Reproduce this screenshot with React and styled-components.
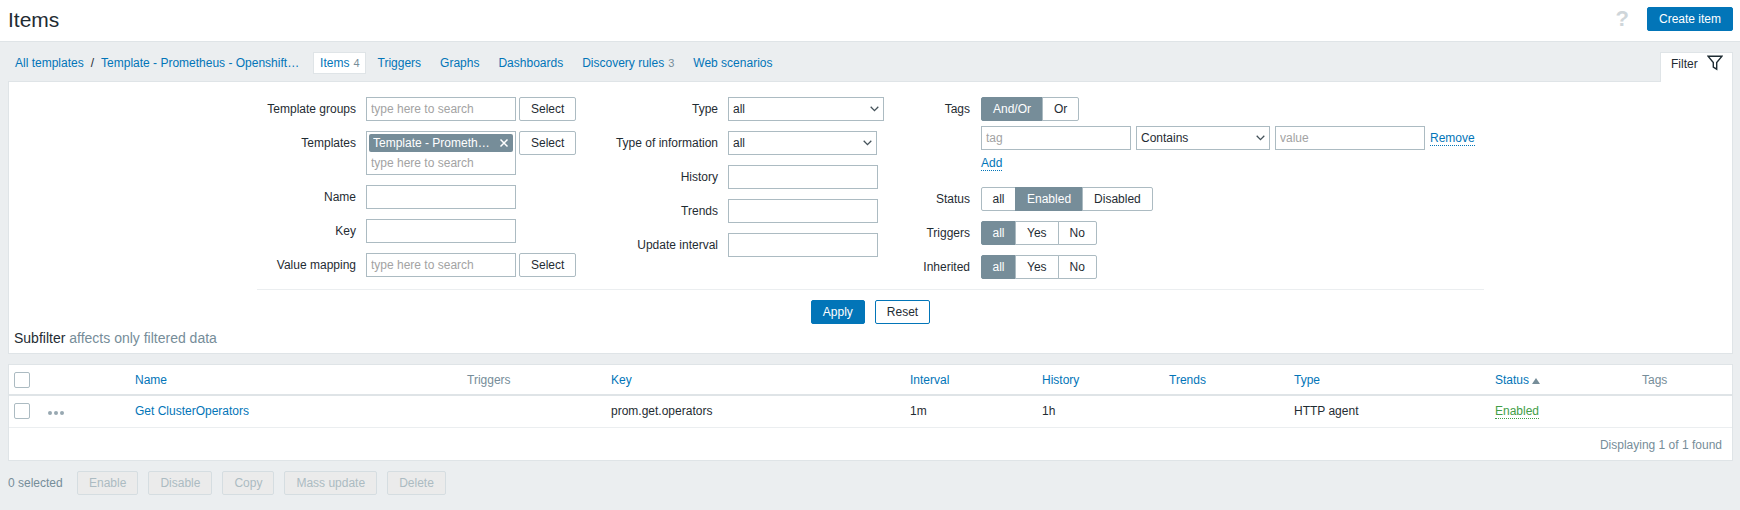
import React from "react";
import styled, { createGlobalStyle } from "styled-components";

const Global = createGlobalStyle`
  html, body { margin: 0; padding: 0; background: #ebeef0; }
  body { font-family: "Liberation Sans", Arial, sans-serif; font-size: 12px; color: #1f2c33; line-height: 14px; }
  * { box-sizing: border-box; }
  input::placeholder { color: #a3a3a3; opacity: 1; }
`;

const Header = styled.header`
  height: 42px; background: #fff; border-bottom: 1px solid #dfe4e7;
  display: flex; align-items: flex-start; justify-content: space-between; padding: 7px 7px 0 8px;
`;
const Title = styled.h1`margin: 1px 0 0; font-size: 21px; font-weight: 400; line-height: 24px; color: #1f2c33;`;
const HeaderActions = styled.div`display: flex; align-items: center; gap: 18px;`;
const Help = styled.span`font-size: 22px; font-weight: 700; line-height: 24px; color: #cfd6da;`;
const Primary = styled.button`
  height: 24px; padding: 0 ${p => p.$pad || 11}px; background: #0275b8; border: 1px solid #0275b8; border-radius: 2px;
  color: #fff; font: 12px "Liberation Sans", Arial, sans-serif;
`;

const NavRow = styled.div`
  display: flex; align-items: flex-start; justify-content: space-between;
  height: 39px; padding: 10px 7px 0 15px;
`;
const Crumbs = styled.nav`display: flex; align-items: center; height: 22px;`;
const NavLink = styled.a`color: #0275b8; text-decoration: none; white-space: nowrap;`;
const Slash = styled.span`margin: 0 7px 0 7px;`;
const CrumbLong = styled(NavLink)`width: 200px; overflow: hidden; text-overflow: ellipsis; display: block;`;
const Tabs = styled.div`display: flex; gap: 7px; margin-left: 12px;`;
const Tab = styled.a`
  height: 22px; padding: 0 ${p => p.$active ? "5px 0 6px" : "6px"}; display: flex; align-items: center; gap: 4px; color: #0275b8;
  margin-right: ${p => p.$active ? "-1px" : "0"};
  background: ${p => p.$active ? "#fff" : "transparent"};
  border: ${p => p.$active ? "1px solid #dfe4e7" : "0"}; white-space: nowrap;
`;
const Count = styled.span`font-size: 11px; color: #768d99;`;
const FilterTab = styled.div`
  width: 73px; height: 30px; position: relative; z-index: 1; background: #fff; border: 1px solid #dfe4e7; border-bottom: 0;
  display: flex; align-items: flex-start; gap: 9px; padding: 2px 0 0 10px; line-height: 14px;
  & > span { margin-top: 2px; }
`;

const Panel = styled.section`
  margin: 0 7px 0 8px; background: #fff; border: 1px solid #dfe4e7; height: 273px; padding: 15px 0 0;
`;
const FormRow = styled.div`display: flex; margin-left: 248px; height: 193px; width: 1227px; border-bottom: 1px solid #ebeef0;`;
const Column = styled.div`display: flex; flex-direction: column; gap: 10px; width: ${p => p.$w}px;`;
const Field = styled.div`display: flex; align-items: flex-start;`;
const Label = styled.label`
  width: ${p => p.$w}px; flex: none; text-align: right; line-height: 24px; padding-right: ${p => p.$gap || 10}px;
`;
const Controls = styled.div`display: flex; align-items: flex-start; gap: ${p => p.$gap || 3}px;`;
const Input = styled.input`
  display: block; width: ${p => p.$w || 150}px; height: 24px; border: 1px solid #acbbc2; padding: 0 4px; background: #fff;
  font: 12px "Liberation Sans", Arial, sans-serif; color: #1f2c33; outline: 0; border-radius: 0;
`;
const Ghost = styled.button`
  height: 24px; padding: 0 ${p => p.$pad || 11}px; background: #fff; border: 1px solid ${p => p.$blue ? "#0275b8" : "#acbbc2"};
  color: #1f2c33; border-radius: 2px; font: 12px "Liberation Sans", Arial, sans-serif;
`;
const MultiBox = styled.div`width: 150px; height: 44px; border: 1px solid #acbbc2; padding: 2px;`;
const Chip = styled.div`
  height: 18px; background: #768d99; color: #fff; border-radius: 2px; display: flex; align-items: center; justify-content: space-between;
  padding: 0 4px 0 4px;
`;
const ChipText = styled.span`width: 118px; overflow: hidden; text-overflow: ellipsis; white-space: nowrap;`;
const MultiInput = styled.input`
  width: 100%; height: 20px; margin-top: 1px; border: 0; padding: 0 2px; font: 12px "Liberation Sans", Arial, sans-serif; outline: 0; display: block;
`;
const SelectWrap = styled.div`position: relative; width: ${p => p.$w}px; height: 24px;`;
const SelectBox = styled.select`
  appearance: none; width: 100%; height: 24px; border: 1px solid #acbbc2; border-radius: 0; background: #fff; padding: 0 4px;
  font: 12px "Liberation Sans", Arial, sans-serif; color: #1f2c33;
`;
const Chevron = styled.svg`position: absolute; right: 5px; top: 9px; pointer-events: none;`;
const Seg = styled.div`display: flex; height: 24px; width: max-content;`;
const SegItem = styled.span`
  height: 24px; display: flex; align-items: center; padding: 0 ${p => p.$pad || 11}px;
  border: 1px solid ${p => p.$on ? "#768d99" : "#acbbc2"}; margin-left: -1px;
  background: ${p => p.$on ? "#768d99" : "#fff"}; color: ${p => p.$on ? "#fff" : "#1f2c33"};
  &:first-child { margin-left: 0; border-radius: 2px 0 0 2px; }
  &:last-child { border-radius: 0 2px 2px 0; }
`;
const TagRow = styled.div`display: flex; align-items: center; gap: 5px; margin-top: 5px;`;
const Dotted = styled.a`
  color: ${p => p.$c || "#0275b8"}; border-bottom: 1px dotted currentColor; text-decoration: none; line-height: 14px; display: inline-block;
`;
const AddLine = styled.div`margin-top: 6px; height: 17px;`;
const TagBlock = styled.div`height: 80px;`;
const Actions = styled.div`display: flex; justify-content: center; gap: 10px; margin-top: 10px; width: 1227px; margin-left: 248px; padding-right: 0;`;
const Subfilter = styled.div`margin: 6px 0 0 5px; font-size: 14px; line-height: 16px;`;
const Muted = styled.span`color: #768d99;`;

const TableCard = styled.section`margin: 10px 7px 0 8px; background: #fff; border: 1px solid #dfe4e7; height: 97px;`;
const Grid = styled.table`width: 100%; table-layout: fixed; border-collapse: collapse;`;
const Th = styled.th`
  height: 30px; padding: 0 5px; text-align: left; font-weight: 400; border-bottom: 2px solid #dfe4e7; color: #768d99;
`;
const Td = styled.td`height: 32px; padding: 0 5px; border-bottom: 1px solid #ebeef0;`;
const SortArrow = styled.span`
  display: inline-block; margin-left: 3px; width: 0; height: 0; border-left: 4px solid transparent; border-right: 4px solid transparent;
  border-bottom: 6px solid #768d99;
`;
const Check = styled.span`display: block; width: 16px; height: 16px; border: 1px solid #acbbc2; border-radius: 2px; background: #fff;`;
const Dots = styled.span`display: flex; gap: 2px; margin-top: 3px;`;
const Dot = styled.i`width: 4px; height: 4px; border-radius: 50%; background: #98a8b1;`;
const Found = styled.div`text-align: right; padding: 10px 10px 0 0; color: #768d99;`;

const Bottom = styled.div`display: flex; align-items: center; margin: 10px 0 0 8px; height: 24px;`;
const Selected = styled.span`color: #768d99; width: 69px;`;
const BulkRow = styled.div`display: flex; gap: 10px;`;
const Disabled = styled.button`
  height: 24px; padding: 0 11px; background: #ebebeb; border: 1px solid #d5dde1; border-radius: 2px; color: #acbbc2;
  font: 12px "Liberation Sans", Arial, sans-serif;
`;

const ChevronIcon = () => (
  <Chevron width="9" height="6" viewBox="0 0 9 6"><path d="M.7.8 4.5 4.6 8.3.8" fill="none" stroke="#44525a" strokeWidth="1.3" /></Chevron>
);
const Select = ({ w, value }) => (
  <SelectWrap $w={w}>
    <SelectBox defaultValue={value}><option>{value}</option></SelectBox>
    <ChevronIcon />
  </SelectWrap>
);
const Search = () => <Input placeholder="type here to search" />;
const Segments = ({ items, on }) => (
  <Seg>{items.map(i => <SegItem key={i} $on={i === on} $pad={i === "all" ? 10.5 : 11}>{i}</SegItem>)}</Seg>
);
const cols = [34, 87, 332, 144, 299, 132, 127, 125, 201, 147, 95];

export default function App() {
  return (
    <>
      <Global />
      <Header>
        <Title>Items</Title>
        <HeaderActions>
          <Help>?</Help>
          <Primary>Create item</Primary>
        </HeaderActions>
      </Header>
      <NavRow>
        <Crumbs>
          <NavLink>All templates</NavLink>
          <Slash>/</Slash>
          <CrumbLong>Template - Prometheus - Openshift - ClusterOperators</CrumbLong>
          <Tabs>
            <Tab $active>Items <Count>4</Count></Tab>
            <Tab>Triggers</Tab>
            <Tab>Graphs</Tab>
            <Tab>Dashboards</Tab>
            <Tab>Discovery rules <Count>3</Count></Tab>
            <Tab>Web scenarios</Tab>
          </Tabs>
        </Crumbs>
        <FilterTab>
          <span>Filter</span>
          <svg width="16" height="16" viewBox="0 0 16 16"><path d="M1 1.2h14L9.7 7.6v6.6L6.3 12V7.6z" fill="none" stroke="#1f2c33" strokeWidth="1.4" strokeLinejoin="miter" /></svg>
        </FilterTab>
      </NavRow>
      <Panel>
        <FormRow>
          <Column $w={330}>
            <Field><Label $w={109}>Template groups</Label><Controls><Search /><Ghost>Select</Ghost></Controls></Field>
            <Field>
              <Label $w={109}>Templates</Label>
              <Controls>
                <MultiBox>
                  <Chip>
                    <ChipText>Template - Prometheus - Openshift</ChipText>
                    <svg width="10" height="10" viewBox="0 0 10 10"><path d="M1.5 1.5l7 7M8.5 1.5l-7 7" stroke="#fff" strokeWidth="1.5" /></svg>
                  </Chip>
                  <MultiInput placeholder="type here to search" />
                </MultiBox>
                <Ghost>Select</Ghost>
              </Controls>
            </Field>
            <Field><Label $w={109}>Name</Label><Input /></Field>
            <Field><Label $w={109}>Key</Label><Input /></Field>
            <Field><Label $w={109}>Value mapping</Label><Controls><Search /><Ghost>Select</Ghost></Controls></Field>
          </Column>
          <Column $w={310}>
            <Field><Label $w={141}>Type</Label><Select w={156} value="all" /></Field>
            <Field><Label $w={141}>Type of information</Label><Select w={149} value="all" /></Field>
            <Field><Label $w={141}>History</Label><Input /></Field>
            <Field><Label $w={141}>Trends</Label><Input /></Field>
            <Field><Label $w={141}>Update interval</Label><Input /></Field>
          </Column>
          <Column $w={587}>
            <Field>
              <Label $w={84} $gap={11}>Tags</Label>
              <TagBlock>
                <Segments items={["And/Or", "Or"]} on="And/Or" />
                <TagRow>
                  <Input placeholder="tag" />
                  <Select w={134} value="Contains" />
                  <Input placeholder="value" />
                  <Dotted>Remove</Dotted>
                </TagRow>
                <AddLine><Dotted>Add</Dotted></AddLine>
              </TagBlock>
            </Field>
            <Field><Label $w={84} $gap={11}>Status</Label><Segments items={["all", "Enabled", "Disabled"]} on="Enabled" /></Field>
            <Field><Label $w={84} $gap={11}>Triggers</Label><Segments items={["all", "Yes", "No"]} on="all" /></Field>
            <Field><Label $w={84} $gap={11}>Inherited</Label><Segments items={["all", "Yes", "No"]} on="all" /></Field>
          </Column>
        </FormRow>
        <Actions>
          <Primary>Apply</Primary>
          <Ghost $blue>Reset</Ghost>
        </Actions>
        <Subfilter>Subfilter <Muted>affects only filtered data</Muted></Subfilter>
      </Panel>
      <TableCard>
        <Grid>
          <colgroup>{cols.map((c, i) => <col key={i} style={{ width: c }} />)}</colgroup>
          <thead>
            <tr>
              <Th><Check /></Th>
              <Th />
              <Th><NavLink>Name</NavLink></Th>
              <Th>Triggers</Th>
              <Th><NavLink>Key</NavLink></Th>
              <Th><NavLink>Interval</NavLink></Th>
              <Th><NavLink>History</NavLink></Th>
              <Th><NavLink>Trends</NavLink></Th>
              <Th><NavLink>Type</NavLink></Th>
              <Th><NavLink>Status</NavLink><SortArrow /></Th>
              <Th>Tags</Th>
            </tr>
          </thead>
          <tbody>
            <tr>
              <Td><Check /></Td>
              <Td><Dots><Dot /><Dot /><Dot /></Dots></Td>
              <Td><NavLink>Get ClusterOperators</NavLink></Td>
              <Td />
              <Td>prom.get.operators</Td>
              <Td>1m</Td>
              <Td>1h</Td>
              <Td />
              <Td>HTTP agent</Td>
              <Td><Dotted $c="#429e47">Enabled</Dotted></Td>
              <Td />
            </tr>
          </tbody>
        </Grid>
        <Found>Displaying 1 of 1 found</Found>
      </TableCard>
      <Bottom>
        <Selected>0 selected</Selected>
        <BulkRow>
          <Disabled>Enable</Disabled>
          <Disabled>Disable</Disabled>
          <Disabled>Copy</Disabled>
          <Disabled>Mass update</Disabled>
          <Disabled>Delete</Disabled>
        </BulkRow>
      </Bottom>
    </>
  );
}
